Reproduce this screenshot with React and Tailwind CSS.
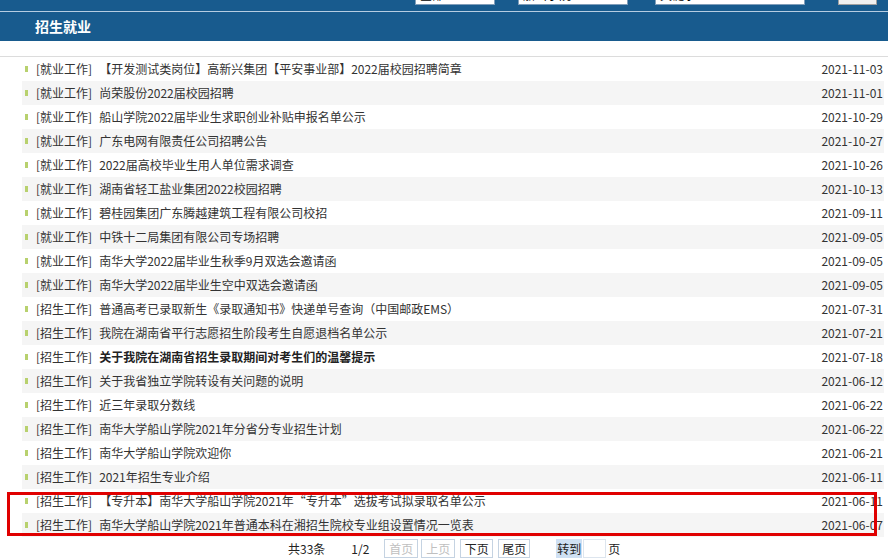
import React from "react";

const rows = [
  ["就业工作", "【开发测试类岗位】高新兴集团【平安事业部】2022届校园招聘简章", "2021-11-03"],
  ["就业工作", "尚荣股份2022届校园招聘", "2021-11-01"],
  ["就业工作", "船山学院2022届毕业生求职创业补贴申报名单公示", "2021-10-29"],
  ["就业工作", "广东电网有限责任公司招聘公告", "2021-10-27"],
  ["就业工作", "2022届高校毕业生用人单位需求调查", "2021-10-26"],
  ["就业工作", "湖南省轻工盐业集团2022校园招聘", "2021-10-13"],
  ["就业工作", "碧桂园集团广东腾越建筑工程有限公司校招", "2021-09-11"],
  ["就业工作", "中铁十二局集团有限公司专场招聘", "2021-09-05"],
  ["就业工作", "南华大学2022届毕业生秋季9月双选会邀请函", "2021-09-05"],
  ["就业工作", "南华大学2022届毕业生空中双选会邀请函", "2021-09-05"],
  ["招生工作", "普通高考已录取新生《录取通知书》快递单号查询（中国邮政EMS）", "2021-07-31"],
  ["招生工作", "我院在湖南省平行志愿招生阶段考生自愿退档名单公示", "2021-07-21"],
  ["招生工作", "关于我院在湖南省招生录取期间对考生们的温馨提示", "2021-07-18", true],
  ["招生工作", "关于我省独立学院转设有关问题的说明", "2021-06-12"],
  ["招生工作", "近三年录取分数线", "2021-06-22"],
  ["招生工作", "南华大学船山学院2021年分省分专业招生计划", "2021-06-22"],
  ["招生工作", "南华大学船山学院欢迎你", "2021-06-21"],
  ["招生工作", "2021年招生专业介绍", "2021-06-11"],
  ["招生工作", "【专升本】南华大学船山学院2021年“专升本”选拔考试拟录取名单公示", "2021-06-11"],
  ["招生工作", "南华大学船山学院2021年普通本科在湘招生院校专业组设置情况一览表", "2021-06-07"],
];

export default function App() {
  return (
    <div className="w-[888px] h-[559px] overflow-hidden bg-white font-['SimSun','Noto_Sans_CJK_SC',sans-serif] text-[12px] text-[#333] relative">
      {/* top search bar (cut off) */}
      <div className="h-[11px] bg-[#185b8e] overflow-hidden flex items-end pb-[6px] pl-[415px]">
        <div className="w-[80px] h-[20px] bg-white border border-[#7f9db9] shrink-0 flex items-center px-[4px] text-[12px] text-black">全部</div>
        <div className="w-[110px] h-[20px] bg-white border border-[#7f9db9] shrink-0 ml-[23px] flex items-center px-[4px] text-[12px] text-black">船山学院</div>
        <div className="w-[150px] h-[20px] bg-white border border-[#7f9db9] shrink-0 ml-[27px] flex items-center px-[4px] text-[12px] text-black">关键字</div>
        <div className="w-[39px] h-[20px] bg-[#f0f0f0] border border-[#a0a0a0] shrink-0 ml-[33px]"></div>
      </div>
      <div className="h-px bg-[#b6cde2]"></div>
      <div className="h-[29px] bg-[#185b8e] flex items-center pl-[35px]">
        <span className="text-white font-bold text-[14px]">招生就业</span>
      </div>
      <div className="h-[15px]"></div>
      <div className="h-px bg-[#dcdcdc]"></div>

      <div className="ml-[22px] mr-[4px]">
        {rows.map((r, i) => (
          <div
            key={i}
            className={`h-[24px] flex items-center ${i % 2 === 1 ? "bg-[#f5f5f5]" : "bg-white"}`}
          >
            <span className="w-[3px] h-[6px] bg-[#b8d16e] ml-[3px] shrink-0"></span>
            <span className="ml-[8px] whitespace-nowrap">[{r[0]}]</span>
            <span className={`ml-[7px] whitespace-nowrap ${r[3] ? "font-bold text-[#222]" : ""}`}>{r[1]}</span>
            <span className="ml-auto pr-[1px] whitespace-nowrap">{r[2]}</span>
          </div>
        ))}
      </div>

      {/* pagination */}
      <div className="flex items-center h-[21px] pl-[288px] mt-[1px] text-[12px] text-[#222]">
        <span>共33条</span>
        <span className="ml-[26px]">1/2</span>
        <span className="ml-[15px] w-[34px] h-[19px] border border-[#c5d3e2] text-[#c0c0c0] flex items-center justify-center">首页</span>
        <span className="ml-[3px] w-[34px] h-[19px] border border-[#c5d3e2] text-[#c0c0c0] flex items-center justify-center">上页</span>
        <span className="ml-[5px] w-[33px] h-[19px] border border-[#c5d3e2] flex items-center justify-center">下页</span>
        <span className="ml-[5px] w-[32px] h-[19px] border border-[#c5d3e2] flex items-center justify-center">尾页</span>
        <span className="ml-[26px] w-[26px] h-[19px] bg-[#cfe0f3] flex items-center justify-center">转到</span>
        <span className="ml-[1px] w-[23px] h-[19px] border border-[#dde5ee]"></span>
        <span className="ml-[2px]">页</span>
      </div>

      {/* red annotation box */}
      <div className="absolute left-[7px] top-[492px] w-[870px] h-[44px] border-[3px] border-[#e00000] pointer-events-none"></div>
    </div>
  );
}
